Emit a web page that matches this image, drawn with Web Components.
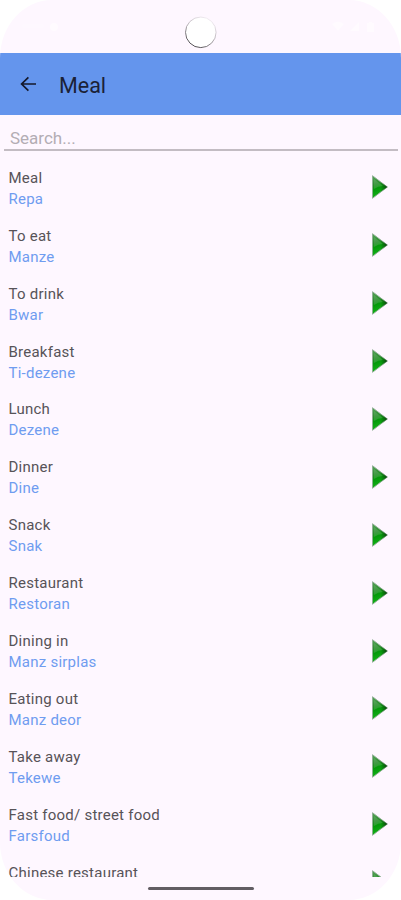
<!DOCTYPE html>
<html lang="en">
<head>
<meta charset="utf-8">
<title>Meal</title>
<style>
  html, body { margin: 0; height: 100%; overflow: hidden; background: #fff; }
  body { font-family: Roboto, "Liberation Sans", sans-serif; }
</style>
</head>
<body>
<phrase-screen></phrase-screen>

<script>
class StatusBar extends HTMLElement {
  constructor() {
    super();
    this.attachShadow({ mode: "open" }).innerHTML = `
      <style>
        :host { display: block; height: 53px; flex: none; }
        svg { display: block; }
      </style>
      <svg width="401" height="53" viewBox="0 0 401 53">
        <defs>
          <linearGradient id="rim" x1=".85" y1="0" x2=".3" y2="1">
            <stop offset="0" stop-color="#fbf5fc"/>
            <stop offset=".45" stop-color="#c4bec4"/>
            <stop offset="1" stop-color="#4d4a4d"/>
          </linearGradient>
        </defs>
        <g fill="#fff" opacity=".5">
          <rect x="22" y="24" width="22" height="4" rx="2" opacity=".4"/>
          <circle cx="54" cy="27" r="4"/>
          <path d="M332 24q6-5 12 0l-6 7zM350 31l9-9v9zM367 23h2v-1h3v1h2v9h-7z"/>
        </g>
        <circle cx="200.8" cy="32.3" r="15.3" fill="#fff" stroke="url(#rim)" stroke-width="1"/>
      </svg>
    `;
  }
}

customElements.define("status-bar", StatusBar);

class AppBar extends HTMLElement {
  constructor() {
    super();
    this.attachShadow({ mode: "open" }).innerHTML = `
      <style>
        :host {
          display: flex;
          align-items: center;
          flex: none;
          box-sizing: border-box;
          height: 62px;
          padding: 4px 0 0 18px;
          background: #6495ed;
          color: #1b2136;
          font-size: 21.5px;
          line-height: 28px;
        }
        svg { display: block; margin: -4px 21px 0 0; }
      </style>
      <svg width="20" height="20" viewBox="0 0 20 20" fill="none" stroke="#14182a" stroke-width="1.7">
        <path d="M18 10H4M10.4 3.4L3.6 10l6.8 6.6"/>
      </svg>
      <slot></slot>
    `;
  }
}

customElements.define("app-bar", AppBar);

class SearchField extends HTMLElement {
  constructor() {
    super();
    this.attachShadow({ mode: "open" }).innerHTML = `
      <style>
        :host {
          display: block;
          flex: none;
          box-sizing: border-box;
          height: 36px;
          margin: 0 3px 0 4px;
          padding: 12px 6px 0;
          border-bottom: 2px solid #c3bcc3;
          color: #b3adb4;
          font-size: 17px;
          line-height: 22px;
        }
      </style>
      <slot></slot>
    `;
  }
}

customElements.define("search-field", SearchField);

class PlayIcon extends HTMLElement {
  constructor() {
    super();
    this.attachShadow({ mode: "open" }).innerHTML = `
      <style>
        :host { display: block; width: 18px; height: 26px; }
        svg { display: block; }
      </style>
      <svg width="18" height="26" viewBox="0 0 18 26">
        <defs>
          <linearGradient id="body" x1="0" y1="0" x2=".25" y2="1">
            <stop offset="0" stop-color="#5ba55d"/>
            <stop offset=".4" stop-color="#2a8c2d"/>
            <stop offset=".6" stop-color="#05990a"/>
            <stop offset="1" stop-color="#16b51a"/>
          </linearGradient>
          <linearGradient id="tip" x1="0" y1="0" x2="1" y2="0">
            <stop offset=".55" stop-color="#0b3d0d" stop-opacity="0"/>
            <stop offset="1" stop-color="#0b2d0d" stop-opacity=".85"/>
          </linearGradient>
        </defs>
        <path d="M1.5 1.7L16.4 13 1.5 24.3z" fill="url(#body)" stroke="#8fae93" stroke-width=".9" stroke-linejoin="round"/>
        <path d="M1.5 1.7L16.4 13 1.5 24.3z" fill="url(#tip)"/>
        <path d="M3 5l9 7Q7 12 3 15z" fill="#a5d3a4" opacity=".2"/>
      </svg>
    `;
  }
}

customElements.define("play-icon", PlayIcon);

class PhraseRow extends HTMLElement {
  constructor() {
    super();
    this.attachShadow({ mode: "open" }).innerHTML = `
      <style>
        :host {
          display: flex;
          align-items: center;
          justify-content: space-between;
          flex: none;
          box-sizing: border-box;
          height: 57.9px;
          padding: 0 12px 0 8.5px;
          font-size: 15px;
          line-height: 21px;
          letter-spacing: .24px;
          color: #575358;
        }
        .text { padding-top: 2.9px; }
        .translation { color: #6f9cf0; }
      </style>
      <div class="text">
        <div><slot></slot></div>
        <div class="translation"><slot name="translation"></slot></div>
      </div>
      <play-icon></play-icon>
    `;
  }
}

customElements.define("phrase-row", PhraseRow);

const phrases = [
  ["Meal", "Repa"],
  ["To eat", "Manze"],
  ["To drink", "Bwar"],
  ["Breakfast", "Ti-dezene"],
  ["Lunch", "Dezene"],
  ["Dinner", "Dine"],
  ["Snack", "Snak"],
  ["Restaurant", "Restoran"],
  ["Dining in", "Manz sirplas"],
  ["Eating out", "Manz deor"],
  ["Take away", "Tekewe"],
  ["Fast food/ street food", "Farsfoud"],
  ["Chinese restaurant", ""]
];

class PhraseScreen extends HTMLElement {
  constructor() {
    super();
    this.attachShadow({ mode: "open" });
  }

  connectedCallback() {
    this.render();
  }

  render() {
    const rows = phrases
      .map(([text, translation]) => `<phrase-row>${text}<span slot="translation">${translation || "&nbsp;"}</span></phrase-row>`)
      .join("");

    this.shadowRoot.innerHTML = `
      <style>
        :host {
          display: flex;
          flex-direction: column;
          width: 401px;
          height: 900px;
          overflow: hidden;
          background: #fef7ff;
          border-radius: 52px / 58px;
        }
        .list {
          display: flex;
          flex-direction: column;
          box-sizing: border-box;
          height: 726px;
          padding-top: 7.5px;
          overflow: hidden;
        }
        .handle {
          width: 106px;
          height: 3px;
          margin: 10px auto 0;
          border-radius: 2px;
          background: #625d63;
        }
      </style>
      <status-bar></status-bar>
      <app-bar>Meal</app-bar>
      <search-field>Search...</search-field>
      <div class="list">${rows}</div>
      <div class="handle"></div>
    `;
  }
}

customElements.define("phrase-screen", PhraseScreen);
</script>
</body>
</html>
